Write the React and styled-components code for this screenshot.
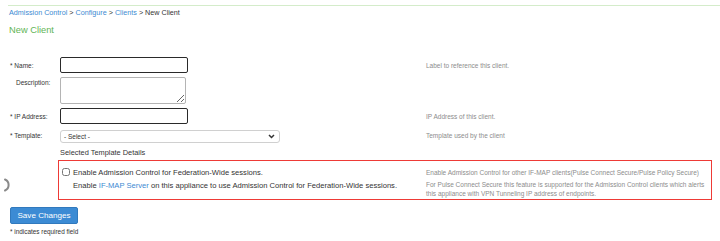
import React from "react"
import styled, { createGlobalStyle } from "styled-components"

const GlobalStyle = createGlobalStyle`
  body {
    margin: 0;
    background: #fff;
    font-family: "Liberation Sans", Arial, sans-serif;
    color: #333;
  }
`

const App = () => (
  <Page>
    <GlobalStyle />
    <Spinner width="12" height="14" viewBox="0 0 12 14">
      <path d="M5 1.5 A6 6 0 0 1 5 12.5" fill="none" stroke="#8a8a8a" strokeWidth="2" strokeLinecap="round" />
    </Spinner>
    <Content>
      <Breadcrumb>
        <Crumb>Admission Control</Crumb> &gt; <Crumb>Configure</Crumb> &gt; <Crumb>Clients</Crumb> &gt; New Client
      </Breadcrumb>
      <Title>New Client</Title>

      <Form>
        <Row>
          <Label>* Name:</Label>
          <TextInput type="text" $w={128} />
          <Help>Label to reference this client.</Help>
        </Row>

        <Row $top>
          <Label $top $indent>Description:</Label>
          <TextArea />
          <Help />
        </Row>

        <Row>
          <Label>* IP Address:</Label>
          <TextInput type="text" $w={128} />
          <Help>IP Address of this client.</Help>
        </Row>

        <Row>
          <Label>* Template:</Label>
          <Select>
            <span>- Select -</span>
            <svg width="7" height="5" viewBox="0 0 7 5">
              <path d="M1 1 L3.5 3.5 L6 1" fill="none" stroke="#333" strokeWidth="1.5" />
            </svg>
          </Select>
          <Help>Template used by the client</Help>
        </Row>

        <Details>Selected Template Details</Details>

        <FedBox>
          <FedMain>
            <CheckLine>
              <Check type="checkbox" />
              Enable Admission Control for Federation-Wide sessions.
            </CheckLine>
            <SubLine>
              Enable <Crumb>IF-MAP Server</Crumb> on this appliance to use Admission Control for Federation-Wide sessions.
            </SubLine>
          </FedMain>
          <FedHelp>
            <p>Enable Admission Control for other IF-MAP clients(Pulse Connect Secure/Pulse Policy Secure)</p>
            <p>For Pulse Connect Secure this feature is supported for the Admission Control clients which alerts this appliance with VPN Tunneling IP address of endpoints.</p>
          </FedHelp>
        </FedBox>
      </Form>

      <SaveButton>Save Changes</SaveButton>
      <Note>* indicates required field</Note>
    </Content>
  </Page>
)

const Page = styled.div`
  position: relative;
  padding-top: 5px;
  height: 236px;
  overflow: hidden;
`

const Spinner = styled.svg`
  position: absolute;
  left: 0;
  top: 178px;
`

const Content = styled.div`
  margin-left: 8px;
  border-top: 1px solid #d4ecca;
`

const Breadcrumb = styled.div`
  font-size: 7.2px;
  line-height: 14px;
  color: #333;
  padding-left: 1px;
`

const Crumb = styled.span`
  color: #3d8ad2;
`

const Title = styled.div`
  margin-top: 3px;
  font-size: 9.3px;
  line-height: 14px;
  color: #62b556;
  padding-left: 1px;
`

const Form = styled.div`
  margin-top: 20px;
  display: flex;
  flex-direction: column;
`

const Row = styled.div`
  display: grid;
  grid-template-columns: 52px 365px 1fr;
  align-items: ${p => (p.$top ? "start" : "center")};
  margin-bottom: 4px;
`

const Label = styled.span`
  font-size: 6.5px;
  color: #333;
  padding-left: ${p => (p.$indent ? "8px" : "2px")};
  padding-top: ${p => (p.$top ? "2px" : "0")};
`

const TextInput = styled.input`
  box-sizing: border-box;
  width: ${p => p.$w}px;
  height: 16px;
  margin: 0;
  border: 1px solid #2a2a2a;
  border-radius: 2px;
  outline: none;
`

const TextArea = styled.textarea`
  box-sizing: border-box;
  width: 126px;
  height: 27px;
  margin: 0;
  border: 1px solid #b4b4b4;
  border-radius: 2px;
  resize: vertical;
`

const Select = styled.div`
  box-sizing: border-box;
  width: 220px;
  height: 13px;
  margin-top: 2px;
  border: 1px solid #d0d0d0;
  border-radius: 3px;
  display: flex;
  align-items: center;
  justify-content: space-between;
  padding: 0 4px 0 3px;
  font-size: 6.5px;
  color: #333;
`

const Help = styled.span`
  font-size: 6.5px;
  color: #8c8c8c;
  padding-left: 1px;
`

const Details = styled.div`
  margin-left: 52px;
  font-size: 7.4px;
  line-height: 12px;
  color: #333;
`

const FedBox = styled.div`
  box-sizing: border-box;
  margin: 1px 0 0 50px;
  width: 654px;
  height: 40px;
  border: 1.5px solid #ee3a36;
  display: grid;
  grid-template-columns: 367px 1fr;
  padding-top: 5px;
`

const FedMain = styled.div`
  padding-left: 3px;
  font-size: 7.6px;
  color: #333;
`

const CheckLine = styled.label`
  display: flex;
  align-items: center;
  gap: 3px;
  height: 12px;
`

const Check = styled.input`
  width: 8px;
  height: 8px;
  margin: 0;
`

const SubLine = styled.div`
  margin-top: 2px;
  padding-left: 11px;
  line-height: 12px;
`

const FedHelp = styled.div`
  font-size: 6.5px;
  color: #8c8c8c;
  padding-right: 4px;
  p {
    margin: 2px 0 3px;
    line-height: 9px;
  }
  p + p {
    margin: 0;
  }
`

const SaveButton = styled.button`
  display: block;
  margin: 7px 0 0 2px;
  width: 68px;
  height: 17px;
  padding: 0;
  background: #3c8bd4;
  border: 1px solid #3179bd;
  border-radius: 2px;
  color: #fff;
  font-family: "Liberation Sans", Arial, sans-serif;
  font-size: 8.1px;
`

const Note = styled.div`
  margin: 4px 0 0 2px;
  font-size: 6.4px;
  color: #333;
`

export default App
